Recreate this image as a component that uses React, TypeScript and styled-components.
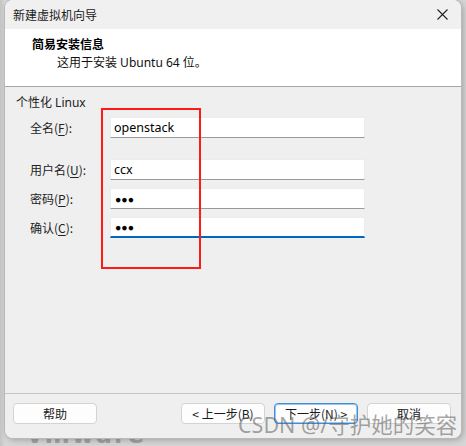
import React from "react";
import styled, { createGlobalStyle } from "styled-components";

const Global = createGlobalStyle`
  html, body { margin: 0; padding: 0; }
  body {
    background: #cfcfcf;
    width: 466px;
    height: 446px;
    overflow: hidden;
    font-family: "Noto Sans", "Noto Sans CJK SC", sans-serif;
  }
`;

const Page = styled.div`
  width: 466px;
  height: 446px;
  display: flex;
  flex-direction: column;
  padding-left: 5px;
  box-sizing: border-box;
  background: linear-gradient(90deg, #c4c4c4 0px, #d6d6d6 5px, #d6d6d6 100%);
`;

const Window = styled.div`
  position: relative;
  width: 456px;
  height: 438px;
  display: flex;
  flex-direction: column;
  background: #f0f0f0;
  border-radius: 8px;
  overflow: hidden;
  box-shadow: 0 0 0 1px #b9b9b9, 2px 2px 6px rgba(0, 0, 0, 0.25);
  flex: none;
`;

const TitleBar = styled.div`
  height: 29px;
  display: flex;
  align-items: center;
  justify-content: space-between;
  padding: 0 12px 0 8px;
  background: #f0f0f0;
  font-size: 12px;
  color: #1a1a1a;
  font-family: "Noto Sans CJK SC", sans-serif;
`;

const Close = styled.svg`
  width: 11px;
  height: 11px;
  margin-right: 1px;
`;

const Header = styled.div`
  height: 58px;
  background: #ffffff;
  padding: 7px 0 0 27px;
  box-sizing: border-box;
  border-bottom: 1px solid #a6a6a6;
  display: flex;
  flex-direction: column;
  gap: 3px;
`;

const HeaderTitle = styled.div`
  font-family: "Noto Sans CJK SC", sans-serif;
  font-weight: 700;
  font-size: 12px;
  line-height: 16px;
  color: #000;
`;

const HeaderSub = styled.div`
  font-family: "Noto Sans", "Noto Sans CJK SC", sans-serif;
  font-size: 12px;
  line-height: 16px;
  padding-left: 25px;
  color: #111;
`;

const Body = styled.div`
  flex: 1;
  display: flex;
  flex-direction: column;
  padding: 8px 0 0 11px;
  background: #efefef;
`;

const GroupLabel = styled.div`
  font-family: "Noto Sans", "Noto Sans CJK SC", sans-serif;
  font-size: 12px;
  line-height: 16px;
  color: #222;
  margin-bottom: 6px;
`;

const Form = styled.div`
  display: flex;
  flex-direction: column;
  padding-left: 14px;
`;

const Row = styled.div<{ $gap: number }>`
  display: flex;
  align-items: center;
  height: 21px;
  margin-bottom: ${(p) => p.$gap}px;
`;

const Label = styled.div`
  width: 80px;
  font-family: "Noto Sans CJK SC", sans-serif;
  font-size: 12px;
  color: #222;
  u { text-decoration: underline; text-underline-offset: 2px; }
`;

const Field = styled.div<{ $focused?: boolean }>`
  width: 255px;
  height: 21px;
  box-sizing: border-box;
  background: #fff;
  border: 1px solid #ececec;
  border-bottom: ${(p) => (p.$focused ? "2px solid #0067c0" : "1px solid #9a9a9a")};
  display: flex;
  align-items: center;
  padding-left: 3px;
  font-family: "Noto Sans", sans-serif;
  font-size: 12.5px;
  color: #000;
`;

const Dots = styled.span`
  font-size: 10.5px;
  letter-spacing: 0px;
  padding-left: 1px;
`;

const Footer = styled.div`
  height: 35px;
  border-top: 1px solid #c4c4c4;
  display: flex;
  align-items: flex-start;
  padding: 9px 10px 0 8px;
  background: #efefef;
`;

const Spacer = styled.div`
  flex: 1;
`;

const Button = styled.div<{ $primary?: boolean }>`
  width: 84px;
  height: 21px;
  box-sizing: border-box;
  border-radius: 4px;
  background: #fdfdfd;
  border: 1px solid ${(p) => (p.$primary ? "#3f8fd6" : "#d3d3d3")};
  box-shadow: ${(p) => (p.$primary ? "inset 0 0 0 1px #9cc6ee" : "none")};
  display: flex;
  align-items: center;
  justify-content: center;
  font-family: "Noto Sans CJK SC", sans-serif;
  font-size: 12px;
  color: #1a1a1a;
  & + & { margin-left: 9px; }
`;

const Annotation = styled.div`
  position: absolute;
  left: 96px;
  top: 108px;
  width: 100px;
  height: 161px;
  box-sizing: border-box;
  border: 2px solid #ff1a1a;
  pointer-events: none;
`;

const Watermark = styled.div`
  position: absolute;
  left: 233px;
  top: 411px;
  font-family: "Noto Sans", "Noto Sans CJK SC", sans-serif;
  font-size: 21.5px;
  line-height: 28px;
  color: rgba(90, 90, 90, 0.55);
  white-space: nowrap;
  pointer-events: none;
`;

const Strip = styled.div`
  height: 8px;
  overflow: hidden;
  padding-left: 22px;
`;

const Brand = styled.div`
  font-family: "DejaVu Sans", sans-serif;
  font-weight: 700;
  font-size: 24px;
  line-height: 24px;
  margin-top: -15px;
  color: #a3a3a3;
  letter-spacing: 2px;
`;

export default function App() {
  return (
    <>
      <Global />
      <Page>
        <Window>
          <TitleBar>
            <span>新建虚拟机向导</span>
            <Close viewBox="0 0 11 11">
              <path d="M0.5 0.5 L10.5 10.5 M10.5 0.5 L0.5 10.5" stroke="#222" strokeWidth="1.1" fill="none" />
            </Close>
          </TitleBar>
          <Header>
            <HeaderTitle>简易安装信息</HeaderTitle>
            <HeaderSub>这用于安装 Ubuntu 64 位。</HeaderSub>
          </Header>
          <Body>
            <GroupLabel>个性化 Linux</GroupLabel>
            <Form>
              <Row $gap={21}>
                <Label>全名(<u>F</u>):</Label>
                <Field>openstack</Field>
              </Row>
              <Row $gap={8}>
                <Label>用户名(<u>U</u>):</Label>
                <Field>ccx</Field>
              </Row>
              <Row $gap={8}>
                <Label>密码(<u>P</u>):</Label>
                <Field><Dots>●●●</Dots></Field>
              </Row>
              <Row $gap={0}>
                <Label>确认(<u>C</u>):</Label>
                <Field $focused><Dots>●●●</Dots></Field>
              </Row>
            </Form>
          </Body>
          <Footer>
            <Button>帮助</Button>
            <Spacer />
            <Button>&lt; 上一步(B)</Button>
            <Button $primary>下一步(N) &gt;</Button>
            <Button>取消</Button>
          </Footer>
          <Annotation />
          <Watermark>CSDN @/守护她的笑容</Watermark>
        </Window>
        <Strip>
          <Brand>vmware</Brand>
        </Strip>
      </Page>
    </>
  );
}
